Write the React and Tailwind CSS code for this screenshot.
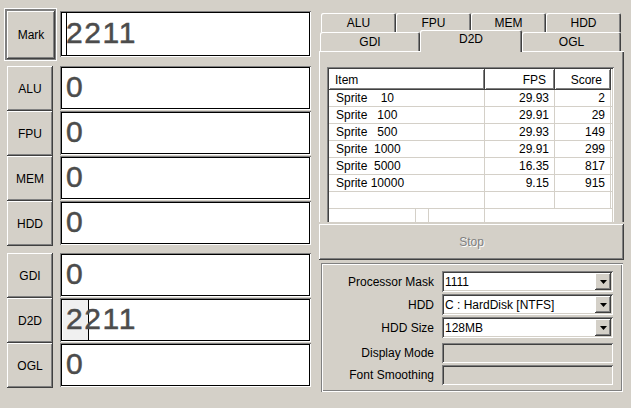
import React from "react";

const raised = "[box-shadow:inset_-1px_-1px_0_#404040,inset_1px_1px_0_#fff,inset_-2px_-2px_0_#808080]";
const sunken = "[box-shadow:inset_1px_1px_0_#808080,inset_-1px_-1px_0_#fff,inset_2px_2px_0_#404040,inset_-2px_-2px_0_#d4d0c8]";
const deep = "[box-shadow:inset_1px_1px_0_#808080,inset_-1px_-1px_0_#fff,inset_2px_2px_0_#000,inset_-2px_-2px_0_#000]";
const tabEdge = "[box-shadow:inset_1px_1px_0_#fff,inset_-1px_0_0_#404040,inset_-2px_0_0_#808080]";

const sprites = [
  [10, "29.93", 2],
  [100, "29.91", 29],
  [500, "29.93", 149],
  [1000, "29.91", 299],
  [5000, "16.35", 817],
  [10000, "9.15", 915],
];

function ScoreBox({ value, caret, selected, tall }) {
  return (
    <div className={`relative flex w-[251px] items-center bg-white pb-[3px] pl-[6px] ${tall ? "h-[46px]" : "mb-[1px] h-[44px]"} ${deep}`}>
      {caret && <div className="absolute bottom-[2px] left-[6px] top-[2px] w-px bg-black" />}
      {selected && <div className="absolute bottom-[2px] left-[3px] top-[2px] w-[26px] border-r border-black bg-[#f0f0f0]" />}
      <span className="relative text-[30px] leading-none tracking-[1.6px] text-[#4c4c4c] [-webkit-text-stroke:0.5px_#4c4c4c]">{value}</span>
    </div>
  );
}

function SideButton({ label }) {
  return (
    <div className={`flex h-[45px] w-[46px] items-center justify-center ${raised}`}>{label}</div>
  );
}

function Combo({ value }) {
  return (
    <div className={`flex h-[21px] w-[171px] bg-white p-[2px] ${sunken}`}>
      <div className="flex flex-1 items-center pl-[1px]">{value}</div>
      <div className={`flex w-[16px] items-center justify-center bg-[#d4d0c8] ${raised}`}>
        <svg width="7" height="4" viewBox="0 0 7 4">
          <path d="M0 0h7L3.5 4z" fill="#000" />
        </svg>
      </div>
    </div>
  );
}

function Field({ label, children, className = "" }) {
  return (
    <div className={`flex items-center ${className}`}>
      <div className="w-[113px] text-right">{label}</div>
      <div className="ml-[8px]">{children}</div>
    </div>
  );
}

export default function App() {
  return (
    <div className="flex h-[408px] w-[631px] overflow-hidden bg-[#d4d0c8] font-['Liberation_Sans',Arial,sans-serif] text-[12px] text-black">
      {/* score column */}
      <div className="w-[319px] shrink-0 pl-[4px] pt-[8px]">
        <div className="flex">
          <div className="h-[53px] w-[53px] border border-white">
            <div className="h-full w-full border border-[#808080]">
              <div className="h-full w-full border-l border-t border-[#808080]">
                <div className={`flex h-full w-full items-center justify-center ${raised}`}>Mark</div>
              </div>
            </div>
          </div>
          <div className="ml-[3px] mt-[3px]">
            <ScoreBox value="2211" caret tall />
          </div>
        </div>

        <div className="mt-[5px] flex">
          <div className="ml-[3px] flex flex-col">
            {["ALU", "FPU", "MEM", "HDD"].map((l) => (
              <SideButton key={l} label={l} />
            ))}
          </div>
          <div className="ml-[7px] flex flex-col">
            {["ALU", "FPU", "MEM", "HDD"].map((l) => (
              <ScoreBox key={l} value="0" />
            ))}
          </div>
        </div>

        <div className="mt-[7px] flex">
          <div className="ml-[3px] flex flex-col">
            {["GDI", "D2D", "OGL"].map((l) => (
              <SideButton key={l} label={l} />
            ))}
          </div>
          <div className="ml-[7px] flex flex-col">
            <ScoreBox value="0" />
            <ScoreBox value="2211" selected />
            <ScoreBox value="0" />
          </div>
        </div>
      </div>

      {/* test column */}
      <div className="w-[305px] shrink-0 pt-[13px]">
        <div className="ml-[2px] flex h-[19px]">
          {["ALU", "FPU", "MEM", "HDD"].map((t) => (
            <div key={t} className={`flex h-[19px] w-[75px] items-center justify-center rounded-t-[2px] ${tabEdge}`}>{t}</div>
          ))}
        </div>
        <div className="ml-[1px] flex h-[19px] items-end">
          <div className={`flex h-[19px] w-[100px] items-center justify-center rounded-t-[2px] ${tabEdge}`}>GDI</div>
          <div className={`relative top-[1px] z-10 flex h-[22px] w-[102px] items-center justify-center rounded-t-[2px] bg-[#d4d0c8] pb-[4px] ${tabEdge}`}>D2D</div>
          <div className={`flex h-[19px] w-[99px] items-center justify-center rounded-t-[2px] ${tabEdge}`}>OGL</div>
        </div>

        <div className={`h-[171px] overflow-hidden pt-[16px] ${tabEdge}`}>
          <div className={`ml-[8px] h-[170px] w-[287px] bg-white p-[2px] ${sunken}`}>
            <div className="flex h-[21px]">
              <div className={`flex w-[156px] items-center pl-[6px] ${raised}`}>Item</div>
              <div className={`flex w-[70px] items-center justify-end pr-[9px] ${raised}`}>FPS</div>
              <div className={`flex w-[56px] items-center justify-end pr-[9px] ${raised}`}>Score</div>
            </div>
            {sprites.map(([n, fps, score]) => (
              <div key={n} className="flex h-[17px] border-b border-[#d4d0c8]">
                <div className="flex w-[156px] items-center whitespace-pre border-r border-[#d4d0c8] pl-[7px]">
                  {`Sprite ${String(n).padStart(5, " ")}`}
                </div>
                <div className="flex w-[70px] items-center justify-end border-r border-[#d4d0c8] pr-[5px]">{fps}</div>
                <div className="flex w-[56px] items-center justify-end border-r border-[#d4d0c8] pr-[5px]">{score}</div>
              </div>
            ))}
            <div className="flex h-[17px] border-b border-[#d4d0c8]">
              <div className="w-[156px] border-r border-[#d4d0c8]" />
              <div className="w-[70px] border-r border-[#d4d0c8]" />
              <div className="w-[56px] border-r border-[#d4d0c8]" />
            </div>
            <div className="flex h-[17px]">
              <div className="w-[87px] border-r border-[#d4d0c8]" />
              <div className="w-[13px] border-r border-[#d4d0c8]" />
              <div className="w-[56px] border-r border-[#d4d0c8]" />
            </div>
          </div>
        </div>

        <div className={`mt-[2px] flex h-[36px] w-[305px] items-center justify-center text-[#808080] [text-shadow:1px_1px_0_#fff] ${raised}`}>
          Stop
        </div>

        <div className="ml-[2px] mt-[3px] h-[129px] w-[302px] pt-[8px] [box-shadow:inset_1px_1px_0_#808080,inset_-1px_-1px_0_#fff,inset_2px_2px_0_#fff,inset_-2px_-2px_0_#808080]">
          <Field label="Processor Mask">
            <Combo value="1111" />
          </Field>
          <Field label="HDD" className="mt-[2px]">
            <Combo value="C : HardDisk [NTFS]" />
          </Field>
          <Field label="HDD Size" className="mt-[2px]">
            <Combo value="128MB" />
          </Field>
          <Field label="Display Mode" className="mt-[5px]">
            <div className={`h-[20px] w-[171px] ${sunken}`} />
          </Field>
          <Field label="Font Smoothing" className="mt-[2px]">
            <div className={`h-[20px] w-[171px] ${sunken}`} />
          </Field>
        </div>
      </div>
    </div>
  );
}
